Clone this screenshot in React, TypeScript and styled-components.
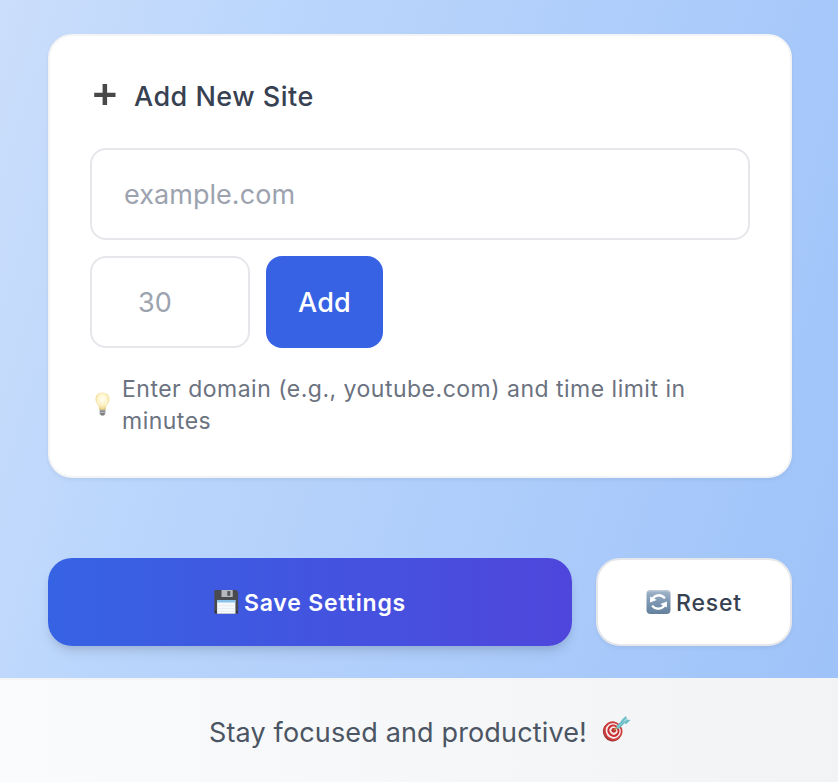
import React from "react";
import styled, { createGlobalStyle } from "styled-components";

const GlobalStyle = createGlobalStyle`
  *, *::before, *::after { box-sizing: border-box; }
  body { margin: 0; font-family: Inter, "Liberation Sans", sans-serif; }
  input, button { font: inherit; margin: 0; }
  svg { display: block; flex: none; }
`;

const Page = styled.div`
  height: 782px;
  display: flex;
  flex-direction: column;
  overflow: hidden;
  background: linear-gradient(107deg, #cbdefb 0%, #bdd7fc 22%, #9dc2f9 100%);
`;

const Main = styled.main`
  height: 678px;
  padding: 34px 46px 32px 48px;
`;

const Card = styled.section`
  height: 444px;
  padding: 40px;
  border: 2px solid #f3f4f6;
  border-radius: 24px;
  background: #fff;
  box-shadow: 0 2px 4px rgba(0, 0, 0, 0.06);
`;

const Heading = styled.h2`
  display: flex;
  align-items: center;
  gap: 18px;
  height: 40px;
  margin: 0 0 32px;
  padding-left: 4px;
  color: #374151;
  font-size: 27px;
  font-weight: 550;
`;

const Label = styled.span<{ $spacing?: number; $drop?: number }>`
  padding-top: ${({ $drop = 0 }) => $drop}px;
  letter-spacing: ${({ $spacing = 0 }) => $spacing}px;
  white-space: nowrap;
`;

const Field = styled.input<{ $compact?: boolean }>`
  display: block;
  width: ${({ $compact }) => ($compact ? "160px" : "100%")};
  height: 92px;
  padding: 1px ${({ $compact }) => ($compact ? "46px" : "32px")} 0;
  border: 2px solid #e5e7eb;
  border-radius: 16px;
  outline: none;
  background: #fff;
  font-size: 27px;
  letter-spacing: 0.05px;
  &::placeholder { color: #9ca3af; opacity: 1; }
`;

const FieldRow = styled.div`
  display: flex;
  gap: 16px;
  margin: 16px 0 24px;
`;

const AddButton = styled.button`
  width: 117px;
  height: 92px;
  padding: 1px 0 0;
  border: 0;
  border-radius: 16px;
  background: #3762e3;
  color: #fff;
  font-size: 27px;
  font-weight: 500;
`;

const Hint = styled.div`
  display: flex;
  align-items: center;
  gap: 8px;
  color: #6b7280;
  font-size: 23px;
  line-height: 32px;
`;

const Actions = styled.div`
  display: flex;
  gap: 24px;
  margin-top: 80px;
`;

const ActionButton = styled.button<{ $primary?: boolean }>`
  display: flex;
  align-items: center;
  justify-content: center;
  gap: 5px;
  width: ${({ $primary }) => ($primary ? "524px" : "196px")};
  height: 88px;
  padding: 0;
  border: ${({ $primary }) => ($primary ? "0" : "2px solid #e5e7eb")};
  border-radius: 24px;
  background: ${({ $primary }) => ($primary ? "linear-gradient(90deg, #3663e3, #4f46dc)" : "#fff")};
  color: ${({ $primary }) => ($primary ? "#fff" : "#374151")};
  box-shadow: ${({ $primary }) =>
    $primary ? "0 8px 12px -2px rgba(0,0,0,.1), 0 4px 8px -4px rgba(0,0,0,.1)" : "0 2px 4px rgba(0,0,0,.05)"};
  font-size: 23px;
  font-weight: ${({ $primary }) => ($primary ? 580 : 500)};
`;

const Footer = styled.footer`
  height: 104px;
  display: flex;
  align-items: center;
  justify-content: center;
  gap: 15px;
  padding: 2px 0 0 2px;
  border-top: 2px solid #f3f4f6;
  background: linear-gradient(90deg, #fafbfc, #f2f3f5);
  color: #4b5563;
  font-size: 27px;
`;

const TargetSlot = styled.span`
  padding-bottom: 7px;
`;

const PlusIcon = () => (
  <svg width="22" height="28" viewBox="1 0 22 28">
    <path d="M9.6 2h4.5v8.7h8.4v4.3h-8.4V23H9.6v-8H1.2v-4.3h8.4z" fill="#484848" />
  </svg>
);

const BulbIcon = () => (
  <svg width="24" height="28" viewBox="0 0 24 28">
    <defs>
      <radialGradient id="bulb" cx=".5" cy=".42" r=".6">
        <stop offset="0" stopColor="#fffef0" />
        <stop offset=".55" stopColor="#fff6cf" />
        <stop offset="1" stopColor="#e6c86f" />
      </radialGradient>
    </defs>
    <path d="M9.7 17h5.6v5.5l-1.3 1.9h-3L9.7 22.4z" fill="#7d7e82" />
    <path d="M9.7 19h5.6M9.7 21.3h5.6" stroke="#d5d6d8" strokeWidth=".8" />
    <path d="M12.4 1.5c-4 0-6.9 2.8-6.9 6.6 0 4.1 3.1 5.5 3.8 9.8.1.6.4.8.9.8h4.5c.5 0 .8-.3.9-.8.7-4.3 3.8-5.7 3.8-9.8 0-3.8-3-6.6-7-6.6z" fill="url(#bulb)" />
    <path d="m10.5 10 1 7.5M14.4 10l-1 7.5" fill="none" stroke="#f3e2ad" strokeWidth=".5" />
  </svg>
);

const DiskIcon = () => (
  <svg width="25" height="26" viewBox="0 0 25 26">
    <path d="M1.2 1h21l2 2v20.8q0 .9-.9.9H1.2q-.9 0-.9-.9V2q0-1 .9-1z" fill="#4a4b50" />
    <path d="M7.5 1h11.2v7H7.5z" fill="#b5b8bd" />
    <path d="M13.3 2.1h3v4.7h-3z" fill="#55565c" />
    <path d="M3.1 11h18.3v13.7H3.1z" fill="#f7fafc" />
    <path d="M3.1 11h18.3v2.5H3.1z" fill="#8bc2e9" />
    <path d="M3.1 16.5h18.3M3.1 19.5h18.3M3.1 22.2h18.3" stroke="#dfe4e9" strokeWidth=".6" />
    <path d="M.9 22h1.5v1.5H.9zm21.4 0h1.3v1.5h-1.3z" fill="#242529" />
  </svg>
);

const RefreshIcon = () => (
  <svg width="25" height="26" viewBox="0 0 25 26">
    <defs>
      <linearGradient id="refresh" x2="0" y2="1">
        <stop stopColor="#a5b7ca" />
        <stop offset=".48" stopColor="#7e98b4" />
        <stop offset="1" stopColor="#64809c" />
      </linearGradient>
    </defs>
    <rect x=".5" y="1" width="24" height="24" rx="4" fill="url(#refresh)" />
    <path d="M2.2 2.8Q3 1.8 4.5 1.8h16q1.6 0 2.3 1" fill="none" stroke="#d0dae4" strokeWidth=".8" />
    <path d="M6.7 9.6c2.6-4.2 8.8-4.6 12.2-.2M18.3 16.4c-2.6 4.2-8.8 4.6-12.2.2" fill="none" stroke="#fff" strokeWidth="2.3" />
    <path d="M4.2 7.4 4 13.6l6.8-2.5zM20.8 18.6l.2-6.2-6.8 2.5z" fill="#fff" />
  </svg>
);

const TargetIcon = () => (
  <svg width="29" height="28" viewBox="0 0 29 28">
    <ellipse cx="10" cy="17.1" rx="8.8" ry="9.7" transform="rotate(-35 10 17.1)" fill="#972e2e" />
    <ellipse cx="11" cy="16" rx="9.3" ry="9.8" transform="rotate(-35 11 16)" fill="#cb3e3e" />
    <ellipse cx="11.2" cy="15.9" rx="7.4" ry="7.9" transform="rotate(-35 11.2 15.9)" fill="#f8eeee" />
    <ellipse cx="11.4" cy="15.7" rx="5.9" ry="6.4" transform="rotate(-35 11.4 15.7)" fill="#c93135" />
    <ellipse cx="11.5" cy="15.6" rx="3.8" ry="4.2" transform="rotate(-35 11.5 15.6)" fill="#f7e9e8" />
    <circle cx="11.8" cy="15.3" r="2.4" fill="#be292e" />
    <path d="m12 15.4 4-4.2" stroke="#b8913e" strokeWidth="1.4" />
    <path d="m14.5 11.2 5.9-6.5 3 2.5-6.2 6.4-2.3.1z" fill="#63bac5" />
    <path d="m19.2 5.3 4.7-4.4 1 2.7-3 3.1zM21.6 7.4l3.2-3 3.7.6-4.4 4.3z" fill="#70c0c7" />
    <path d="M15.5 12.8 24.8 3.5" stroke="#9ed8d9" strokeWidth=".9" />
  </svg>
);

export default function App() {
  return (
    <Page>
      <GlobalStyle />
      <Main>
        <Card>
          <Heading><PlusIcon /><Label $spacing={0.48} $drop={1}>Add New Site</Label></Heading>
          <Field placeholder="example.com" aria-label="Domain" />
          <FieldRow>
            <Field $compact placeholder="30" aria-label="Minutes" />
            <AddButton><Label $spacing={0.2}>Add</Label></AddButton>
          </FieldRow>
          <Hint>
            <BulbIcon />
            <Label $spacing={0.49} $drop={1}>Enter domain (e.g., youtube.com) and time limit in<br />minutes</Label>
          </Hint>
        </Card>
        <Actions>
          <ActionButton $primary><DiskIcon /><Label $spacing={0.82} $drop={2}>Save Settings</Label></ActionButton>
          <ActionButton><RefreshIcon /><Label $spacing={0.8} $drop={2}>Reset</Label></ActionButton>
        </Actions>
      </Main>
      <Footer>
        <Label $spacing={0.15}>Stay focused and productive!</Label>
        <TargetSlot><TargetIcon /></TargetSlot>
      </Footer>
    </Page>
  );
}
